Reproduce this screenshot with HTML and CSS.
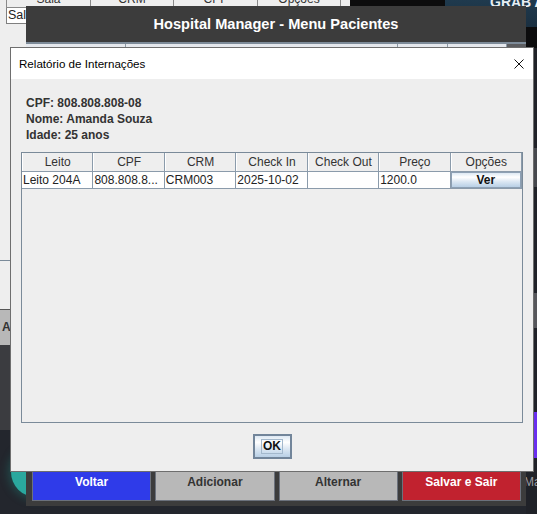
FILE: index.html
```html
<!DOCTYPE html>
<html lang="pt">
<head>
<meta charset="utf-8">
<title>Relatório de Internações</title>
<link rel="stylesheet" href="styles.css">
</head>
<body>
<div class="desktop">
  <div class="bg-left">
    <div class="bgl-head">
      <div class="bgl-hcell w84">Sala</div>
      <div class="bgl-hcell w83">CRM</div>
      <div class="bgl-hcell w84">CPF</div>
      <div class="bgl-hcell w83">Opções</div>
    </div>
    <div class="bgl-row">Sala 101</div>
    <div class="bgl-gap1"></div>
    <div class="bgl-line"></div>
    <div class="bgl-gap2"></div>
    <div class="bgl-btn">Atualizar</div>
    <div class="bgl-foot"></div>
  </div>

  <div class="bg-black"></div>
  <div class="bg-image"><span class="bg-image-text">GRAB A</span></div>

  <div class="right-strip">
    <div class="rs-patch1"></div>
    <div class="rs-patch2"></div>
    <div class="rs-purple"></div>
    <div class="rs-text">Mat</div>
  </div>

  <div class="teal-dot"></div>

  <div class="dark-window">
    <div class="dw-title">Hospital Manager - Menu Pacientes</div>
    <div class="dw-content">
      <div class="dw-thead">
        <div class="dw-hcell w100"></div>
        <div class="dw-hcell w272"></div>
        <div class="dw-hcell w50"></div>
        <div class="dw-hcell w59"></div>
        <div class="dw-scroll"></div>
      </div>
    </div>
    <div class="dw-bar">
      <div class="dw-btn btn-blue">Voltar</div>
      <div class="dw-btn btn-gray">Adicionar</div>
      <div class="dw-btn btn-gray">Alternar</div>
      <div class="dw-btn btn-red">Salvar e Sair</div>
    </div>
  </div>

  <div class="dialog">
    <div class="dlg-title">
      <span class="dlg-title-text">Relatório de Internações</span>
      <svg class="dlg-close" width="10" height="10" viewBox="0 0 10 10">
        <path d="M0.5 0.5 L9.5 9.5 M9.5 0.5 L0.5 9.5" stroke="#111" stroke-width="1" fill="none"/>
      </svg>
    </div>
    <div class="dlg-body">
      <div class="info">
        <div>CPF: 808.808.808-08</div>
        <div>Nome: Amanda Souza</div>
        <div>Idade: 25 anos</div>
      </div>
      <div class="table-pane">
        <div class="thead">
          <div class="th">Leito</div>
          <div class="th">CPF</div>
          <div class="th">CRM</div>
          <div class="th">Check In</div>
          <div class="th">Check Out</div>
          <div class="th">Preço</div>
          <div class="th">Opções</div>
        </div>
        <div class="trow">
          <div class="td">Leito 204A</div>
          <div class="td">808.808.8...</div>
          <div class="td">CRM003</div>
          <div class="td">2025-10-02</div>
          <div class="td"></div>
          <div class="td">1200.0</div>
          <div class="td td-btn"><div class="ver-btn">Ver</div></div>
        </div>
      </div>
      <div class="dlg-actions">
        <div class="ok-btn"><span class="ok-focus">OK</span></div>
      </div>
    </div>
  </div>
</div>
</body>
</html>
```

FILE: styles.css
```css
* { box-sizing: border-box; margin: 0; padding: 0; }
html, body { width: 537px; height: 514px; overflow: hidden; }
body { font-family: "Liberation Sans", Arial, sans-serif; font-size: 12px; background: #23262d; }

.desktop { position: relative; width: 537px; height: 514px; background: #23262d; overflow: hidden; }

/* background app window (left) */
.bg-left { position: absolute; left: 0; top: 0; width: 353px; height: 430px; background: #eeeeee; display: flex; flex-direction: column; }
.bgl-head { margin-top: -8px; height: 16px; margin-left: 6px; display: flex; border-left: 1px solid #8a8a8a; border-bottom: 1px solid #8a8a8a; flex: none; }
.bgl-hcell { height: 15px; line-height: 14px; text-align: center; color: #333; border-right: 1px solid #8a8a8a; font-size: 12px; }
.w84 { width: 84px; }
.w83 { width: 83px; }
.bgl-row { height: 16px; margin-left: 6px; background: #fff; border-left: 1px solid #7f7f7f; border-bottom: 1px solid #7f7f7f; line-height: 15px; padding-left: 1px; color: #222; font-size: 12.5px; flex: none; }
.bgl-gap1 { height: 236px; flex: none; }
.bgl-line { height: 1px; background: #7a8a99; flex: none; }
.bgl-gap2 { height: 48px; flex: none; }
.bgl-btn { height: 36px; background: #b8b8b8; border-top: 1px solid #555; font-weight: bold; color: #333; line-height: 34px; padding-left: 2px; font-size: 12px; flex: none; }
.bgl-foot { flex: 1; background: #3b3c40; }

.bg-black { position: absolute; left: 350px; top: 0; width: 187px; height: 48px; background: #0c0c0d; }
.bg-image { position: absolute; left: 445px; top: 0; width: 92px; height: 27px; background: linear-gradient(180deg, #1f3a4e, #1a2f40); overflow: hidden; }
.bg-image-text { display: block; margin-top: -5px; padding-left: 45px; line-height: 14px; font-size: 14px; font-weight: bold; color: #e8eef2; white-space: nowrap; }

.right-strip { position: absolute; left: 526px; top: 48px; width: 11px; height: 466px; background: #202228; display: flex; flex-direction: column; }
.rs-patch1 { margin-top: 100px; height: 39px; background: #46484d; flex: none; }
.rs-patch2 { margin-top: 106px; height: 35px; background: #56575b; flex: none; }
.rs-purple { margin-top: 84px; height: 46px; background: #6a2ff0; flex: none; }
.rs-text { margin-top: 17px; margin-left: -2px; font-size: 12px; line-height: 14px; color: #9a9ca2; white-space: nowrap; flex: none; }

.teal-dot { position: absolute; left: 11px; top: 447px; width: 50px; height: 50px; border-radius: 50%; background: #2aa89e; box-shadow: 0 0 9px 3px rgba(32, 140, 128, 0.35); }

/* main dark window */
.dark-window { position: absolute; left: 26px; top: 6px; width: 500px; height: 500px; background: #3c3c3c; display: flex; flex-direction: column; }
.dw-title { height: 36px; display: flex; align-items: center; justify-content: center; color: #ffffff; font-weight: bold; font-size: 14.6px; flex: none; }
.dw-content { flex: 1; background: #eeeeee; border-top: 2px solid #7d8b99; }
.dw-thead { display: flex; height: 16px; background: #e6e9ee; }
.dw-hcell { border-right: 1px solid #8e9aa6; height: 16px; }
.w100 { width: 100px; }
.w272 { width: 272px; }
.w50 { width: 50px; }
.w59 { width: 59px; }
.dw-scroll { flex: 1; background: #5c5d60; }
.dw-bar { flex: none; display: flex; gap: 4px; padding: 6px 5px 5px 6px; }
.dw-btn { flex: 1; height: 38px; border: 1px solid #6b717c; font-weight: bold; font-size: 12px; display: flex; align-items: center; justify-content: center; }
.btn-blue { background: #2f3be9; color: #ffffff; }
.btn-gray { background: #b8b8b8; color: #333333; }
.btn-red { background: #c1222f; color: #ffffff; }

/* dialog */
.dialog { position: absolute; left: 10px; top: 47px; width: 524px; height: 425px; border: 1px solid #6e6e6e; background: #eeeeee; display: flex; flex-direction: column; z-index: 5; }
.dlg-title { height: 31px; background: #ffffff; display: flex; align-items: center; justify-content: space-between; padding: 0 9px 0 8px; flex: none; }
.dlg-title-text { font-size: 11.6px; color: #000; }
.dlg-close { display: block; }
.dlg-body { flex: 1; display: flex; flex-direction: column; padding: 16px 10px 0 10px; }
.info { margin-left: 5px; font-weight: bold; color: #333333; font-size: 12px; line-height: 16px; }
.table-pane { margin-top: 9px; height: 271px; border: 1px solid #7a8a99; background: #eeeeee; }
.thead { display: grid; grid-template-columns: repeat(7, 1fr); height: 19px; border-bottom: 1px solid #8b9bab; }
.th { background: #eeeeee; border-right: 1px solid #8b9bab; border-left: 1px solid #ffffff; text-align: center; line-height: 18px; color: #333333; font-size: 12px; }
.trow { display: grid; grid-template-columns: repeat(7, 1fr); height: 17px; background: #ffffff; border-bottom: 1px solid #8b9bab; }
.td { border-right: 1px solid #8b9bab; line-height: 16px; padding-left: 1px; color: #222222; font-size: 12px; white-space: nowrap; overflow: hidden; }
.td-btn { padding: 0; }
.ver-btn { height: 16px; border: 1px solid #8da0b4; background: linear-gradient(180deg, #dde8f3 0%, #ffffff 30%, #dde8f3 60%, #b8cfe5 100%); font-weight: bold; text-align: center; line-height: 14px; color: #111; }
.dlg-actions { display: flex; justify-content: center; margin-top: 11px; }
.ok-btn { width: 39px; height: 25px; border: 2px solid #72859a; background: linear-gradient(180deg, #dde8f3 0%, #ffffff 30%, #dde8f3 60%, #b8cfe5 100%); display: flex; align-items: center; justify-content: center; }
.ok-focus { border: 1px solid #a3b8cc; font-weight: bold; font-size: 12px; line-height: 13px; padding: 0 1px; color: #111; }
```
